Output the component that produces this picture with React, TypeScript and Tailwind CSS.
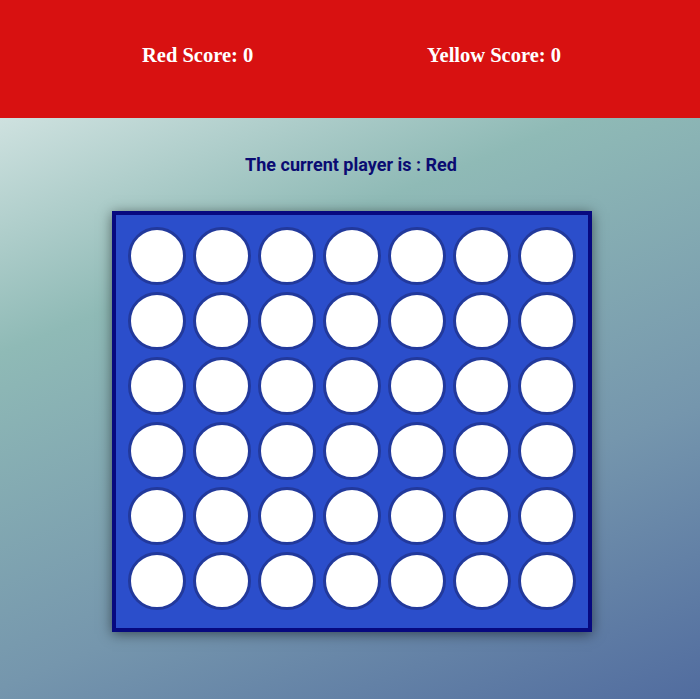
import React from "react";

const ROWS = 6;
const COLS = 7;

export default function App() {
  return (
    <div className="min-h-[699px] w-full bg-[linear-gradient(158deg,#eef5f4_0%,#8fbab6_36%,#7596ad_70%,#516c9f_100%)]">
      <header className="h-[118px] bg-[#d81111] flex items-center pb-[8px]">
        <div className="ml-[142px] w-[419px] flex justify-between text-white font-bold text-[20.5px] font-['Liberation_Serif',serif]">
          <span>Red Score: 0</span>
          <span>Yellow Score: 0</span>
        </div>
      </header>
      <h2 className="mt-[35px] pl-[2px] text-center text-[18px] leading-[24px] font-bold text-[#0b0b72] font-['Roboto',sans-serif]">
        The current player is : Red
      </h2>
      <div className="mt-[34px] ml-[112px] w-[480px] h-[421px] border-4 border-[#07097f] bg-[#2b4ecb] shadow-[0_2px_12px_rgba(0,0,0,0.5)] px-[12px] pt-[12px] flex flex-col gap-[7px]">
        {Array.from({ length: ROWS }).map((_, r) => (
          <div key={r} className="flex gap-[7px]">
            {Array.from({ length: COLS }).map((_, c) => (
              <div
                key={c}
                className="w-[58px] h-[58px] rounded-full bg-white border-[3px] border-[#22399c]"
              />
            ))}
          </div>
        ))}
      </div>
    </div>
  );
}
